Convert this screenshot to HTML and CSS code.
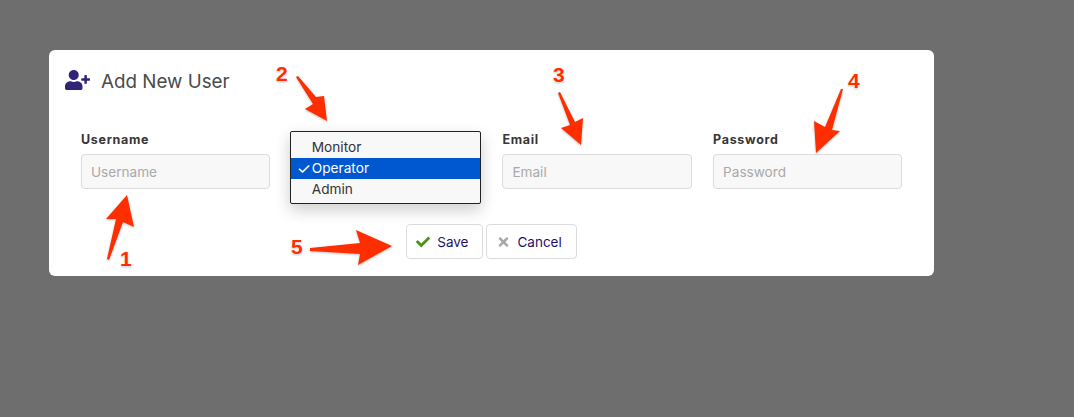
FILE: index.html
```html
<!DOCTYPE html>
<html lang="en">
<head>
    <meta charset="UTF-8">
    <title>Add New User</title>
    <link rel="stylesheet" href="styles.css">
</head>
<body>
    <main class="card">
        <h2 class="card-title">
            <svg class="title-icon" viewBox="0 0 640 512"><path d="M624 208h-64v-64c0-8.8-7.2-16-16-16h-32c-8.800 0-16 7.200-16 16v64h-64c-8.800 0-16 7.200-16 16v32c0 8.800 7.200 16 16 16h64v64c0 8.800 7.200 16 16 16h32c8.800 0 16-7.200 16-16v-64h64c8.800 0 16-7.200 16-16v-32c0-8.800-7.200-16-16-16zm-400 48c70.700 0 128-57.300 128-128S294.700 0 224 0 96 57.300 96 128s57.300 128 128 128zm89.600 32h-16.700c-22.200 10.200-46.900 16-72.900 16s-50.600-5.800-72.900-16h-16.700C60.200 288 0 348.200 0 422.400V464c0 26.500 21.500 48 48 48h352c26.500 0 48-21.500 48-48v-41.600c0-74.200-60.200-134.400-134.400-134.400z"/></svg>
            <span class="title-text">Add New User</span>
        </h2>

        <form class="user-form">
            <div class="field">
                <label class="field-label">Username</label>
                <input class="field-input" placeholder="Username">
            </div>
            <div class="field">
                <div class="field-label"></div>
                <div class="field-input select-box"></div>
                <ul class="select-menu">
                    <li class="select-option">Monitor</li>
                    <li class="select-option selected"><span class="option-check">✓</span>Operator</li>
                    <li class="select-option">Admin</li>
                </ul>
            </div>
            <div class="field">
                <label class="field-label">Email</label>
                <input class="field-input" placeholder="Email">
            </div>
            <div class="field">
                <label class="field-label">Password</label>
                <input class="field-input" placeholder="Password">
            </div>
        </form>

        <div class="actions">
            <button class="btn" type="button">
                <svg class="btn-icon icon-save" viewBox="0 0 512 512"><path d="M173.898 439.404l-166.400-166.400c-9.997-9.997-9.997-26.206 0-36.204l36.203-36.204c9.997-9.998 26.207-9.998 36.204 0L192 312.690 432.095 72.596c9.997-9.997 26.207-9.997 36.204 0l36.203 36.204c9.997 9.997 9.997 26.206 0 36.204l-294.400 294.401c-9.998 9.997-26.207 9.997-36.204-.001z"/></svg>
                Save
            </button>
            <button class="btn" type="button">
                <svg class="btn-icon icon-cancel" viewBox="0 0 352 512"><path d="M242.720 256l100.070-100.070c12.280-12.280 12.280-32.190 0-44.480l-22.240-22.240c-12.280-12.280-32.190-12.280-44.480 0L176 189.280 75.930 89.210c-12.280-12.280-32.190-12.280-44.480 0L9.210 111.450c-12.280 12.280-12.280 32.190 0 44.480L109.280 256 9.210 356.070c-12.280 12.280-12.280 32.190 0 44.480l22.240 22.240c12.280 12.280 32.200 12.280 44.480 0L176 322.720l100.070 100.070c12.280 12.280 32.200 12.280 44.480 0l22.240-22.240c12.280-12.280 12.280-32.190 0-44.480L242.720 256z"/></svg>
                Cancel
            </button>
        </div>
    </main>

    <!-- red annotations drawn over the screenshot -->
    <svg class="arrows" viewBox="0 0 1074 417">
        <polygon points="127,195 134,227 123,222 109,260 107,259 116,219 106,219"/>
        <polygon points="296,77 298,76 316,97 324,96 327,121 305,109 313,104"/>
        <polygon points="558,93 560,92 575,122 583,118 581,145 561,128 570,125"/>
        <polygon points="841,89 843,89 832,130 840,131 816,153 814,121 825,127"/>
        <polygon points="310,248 360,243 356,230 392,246 358,265 360,254 310,251"/>
    </svg>
    <span class="note note-1">1</span>
    <span class="note note-2">2</span>
    <span class="note note-3">3</span>
    <span class="note note-4">4</span>
    <span class="note note-5">5</span>
</body>
</html>
```

FILE: styles.css
```css
* {
    margin: 0;
    padding: 0;
    box-sizing: border-box;
}

body {
    position: relative;
    width: 1074px;
    height: 417px;
    padding: 50px 0 0 49px;
    overflow: hidden;
    background: #6e6e6e;
    font-family: Inter, "Liberation Sans", sans-serif;
}

.card {
    width: 885px;
    height: 226px;
    padding: 18px 32px 0 16px;
    background: #fff;
    border-radius: 6px;
}

.card-title {
    display: flex;
    align-items: center;
    gap: 11px;
    height: 26px;
    font-family: Inter, "Liberation Sans", sans-serif;
    font-size: 18.800px;
    font-weight: 400;
    color: #4a4a4a;
}

.title-icon {
    width: 25px;
    height: 20px;
    margin-top: -2px;
    fill: #2f2475;
}

.user-form {
    display: grid;
    grid-template-columns: repeat(4, 189.400px);
    column-gap: 21.300px;
    margin: 34px 0 0 16px;
}

.field {
    position: relative;
}

.field-label {
    display: block;
    height: 26px;
    padding-top: 4px;
    font-family: Inter, "Liberation Sans", sans-serif;
    font-size: 12.500px;
    font-weight: 700;
    letter-spacing: 0.700px;
    color: #363636;
}

.field-input {
    display: block;
    width: 100%;
    height: 35px;
    padding: 0 9px;
    background: #f8f8f8;
    border: 1px solid #dcdcdc;
    border-radius: 4px;
    font-family: inherit;
    font-size: 13.600px;
}

.field-input::placeholder {
    color: #a9a9a9;
}

.select-box {
    background: #0a5bd0;
}

.select-menu {
    position: absolute;
    top: 3px;
    left: -2px;
    width: 191px;
    height: 73px;
    padding: 5px 0;
    list-style: none;
    background: #f8f8f8;
    border: 1px solid #222;
    border-radius: 2px;
    box-shadow: 0 6px 16px rgba(0, 0, 0, 0.2);
}

.select-option {
    position: relative;
    height: 21px;
    padding-left: 21px;
    font-size: 13.700px;
    line-height: 21px;
    color: #333;
}

.selected {
    background: #0058d0;
    color: #fff;
}

.option-check {
    position: absolute;
    left: 6px;
    font-size: 16px;
}

.actions {
    display: flex;
    justify-content: center;
    gap: 3px;
    margin: 35px -16px 0 0;
}

.btn {
    display: flex;
    align-items: center;
    height: 35px;
    padding: 0 14px 0 9px;
    background: #fff;
    border: 1px solid #dcdcdc;
    border-radius: 4px;
    font-family: inherit;
    font-size: 13.500px;
    color: #1f1066;
}

.btn-icon {
    width: 14px;
    height: 14px;
    margin-right: 7px;
}

.icon-save {
    fill: #48960c;
}

.icon-cancel {
    width: 11px;
    margin-left: 2px;
    margin-right: 8px;
    fill: #a8a8a8;
}

.arrows {
    position: absolute;
    top: 0;
    left: 0;
    width: 1074px;
    height: 417px;
    fill: #ff2e00;
    filter: drop-shadow(0 1px 1px rgba(0, 0, 0, 0.25));
}

.note {
    position: absolute;
    font-family: "Liberation Sans", sans-serif;
    font-size: 21px;
    font-weight: 700;
    line-height: 24px;
    color: #ff2e00;
    text-shadow: 0 0 2px #fff, 0 0 2px #fff, 0 0 2px #fff, 0 1px 2px rgba(0, 0, 0, 0.4);
}

.note-1 { left: 120px; top: 247px; }
.note-2 { left: 276px; top: 62px; }
.note-3 { left: 553px; top: 63px; }
.note-4 { left: 848px; top: 69px; }
.note-5 { left: 291px; top: 235px; }
```
